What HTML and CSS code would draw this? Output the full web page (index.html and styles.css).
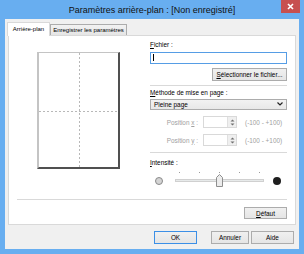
FILE: index.html
```html
<!DOCTYPE html>
<html lang="fr">
<head>
<meta charset="utf-8">
<title>Paramètres arrière-plan</title>
<link rel="stylesheet" href="styles.css">
</head>
<body>
<div class="window">
  <div class="titlebar">
    <span class="spacer"></span>
    <span class="title">Paramètres arrière-plan : [Non enregistré]</span>
    <span class="close-wrap"><span class="close"><svg width="7" height="7" viewBox="0 0 7 7"><path d="M1 1L6 6M6 1L1 6" stroke="#fff" stroke-width="1.6"/></svg></span></span>
  </div>
  <div class="client">
    <div class="tabs">
      <div class="tab active">Arrière-plan</div>
      <div class="tab">Enregistrer les paramètres</div>
    </div>
    <div class="panel">
      <div class="top">
        <div class="preview-col">
          <div class="page">
            <svg width="79" height="114" viewBox="0 0 79 114">
              <line x1="40.5" y1="0" x2="40.5" y2="114" stroke="#b8b8b8" stroke-dasharray="2 2"/>
              <line x1="0" y1="58.5" x2="79" y2="58.5" stroke="#b8b8b8" stroke-dasharray="2 2"/>
            </svg>
          </div>
        </div>
        <div class="controls">
          <div class="label"><u>F</u>ichier :</div>
          <div class="input"><span class="caret"></span></div>
          <div class="btn-row"><span class="btn wide-btn"><u>S</u>électionner le fichier...</span></div>
          <div class="sep"></div>
          <div class="label label-gap"><u>M</u>éthode de mise en page :</div>
          <div class="select">
            <span>Pleine page</span>
            <svg width="6" height="4" viewBox="0 0 6 4"><path d="M0.5 0.5L3 3L5.5 0.5" fill="none" stroke="#222" stroke-width="1.2"/></svg>
          </div>
          <div class="pos-row">
            <span class="pos-label">Position <u>x</u> :</span>
            <span class="spin"><span class="spin-field"></span><span class="spin-btn"><svg width="5" height="7" viewBox="0 0 5 7"><path d="M0.5 2.5L2.5 0.5L4.5 2.5Z M0.5 4.5L2.5 6.5L4.5 4.5Z" fill="#707070"/></svg></span></span>
            <span class="range">(-100 - +100)</span>
          </div>
          <div class="pos-row">
            <span class="pos-label">Position <u>y</u> :</span>
            <span class="spin"><span class="spin-field"></span><span class="spin-btn"><svg width="5" height="7" viewBox="0 0 5 7"><path d="M0.5 2.5L2.5 0.5L4.5 2.5Z M0.5 4.5L2.5 6.5L4.5 4.5Z" fill="#707070"/></svg></span></span>
            <span class="range">(-100 - +100)</span>
          </div>
          <div class="sep sep-gap"></div>
          <div class="label label-gap2"><u>I</u>ntensité :</div>
          <div class="slider">
            <svg width="137" height="20" viewBox="0 0 137 20">
              <circle cx="9" cy="13" r="3.5" fill="#d4d4d4" stroke="#8a8a8a"/>
              <rect x="25.5" y="11.5" width="88" height="2" fill="#e7eaea" stroke="#d0d0d0"/>
              <g fill="#9a9a9a">
                <rect x="29" y="4" width="1" height="1"/>
                <rect x="49" y="4" width="1" height="1"/>
                <rect x="69" y="4" width="1" height="1"/>
                <rect x="89" y="4" width="1" height="1"/>
                <rect x="109" y="4" width="1" height="1"/>
              </g>
              <path d="M66.5 18.5L72.5 18.5L72.5 9.5L69.5 6.5L66.5 9.5Z" fill="#ececec" stroke="#8e8e8e"/>
              <circle cx="127" cy="13" r="4" fill="#1e1e1e"/>
            </svg>
          </div>
        </div>
      </div>
      <div class="sep wide-sep"></div>
      <div class="btn-row defaut-row"><span class="btn"><u>D</u>éfaut</span></div>
    </div>
    <div class="footer">
      <span class="btn default">OK</span>
      <span class="btn annuler">Annuler</span>
      <span class="btn">Aide</span>
    </div>
  </div>
</div>
</body>
</html>
```

FILE: styles.css
```css
html, body {
  margin: 0;
  padding: 0;
}

body {
  width: 304px;
  height: 254px;
  overflow: hidden;
  font-family: "Liberation Sans", Arial, sans-serif;
  font-size: 6.4px;
  color: #000;
}

u {
  text-decoration: underline;
  text-underline-offset: 1px;
}

.window {
  width: 304px;
  height: 254px;
  background: #68aef0;
  display: flex;
  flex-direction: column;
  box-sizing: border-box;
}

.titlebar {
  height: 19px;
  display: grid;
  grid-template-columns: 1fr auto 1fr;
  align-items: start;
}

.title {
  font-size: 9px;
  line-height: 20px;
  color: #111;
  white-space: nowrap;
}

.close-wrap {
  justify-self: end;
  padding-right: 4px;
}

.close {
  width: 19px;
  height: 13px;
  background: #c75050;
  display: flex;
  align-items: center;
  justify-content: center;
}

.client {
  flex: 1;
  margin: 0 5px 5px;
  background: #f0f0f0;
  padding: 3px 3px 5px;
  display: flex;
  flex-direction: column;
  box-sizing: border-box;
}

.tabs {
  display: flex;
  height: 13px;
  align-items: flex-end;
  position: relative;
  z-index: 1;
}

.tab {
  box-sizing: border-box;
  height: 11px;
  width: 77px;
  border: 1px solid #acacac;
  border-bottom: none;
  background: linear-gradient(#f2f2f2, #e5e5e5);
  text-align: center;
  line-height: 10px;
  white-space: nowrap;
  font-size: 6px;
  overflow: hidden;
}

.tab.active {
  height: 14px;
  width: 43px;
  margin-left: -1px;
  margin-bottom: -1px;
  background: #fff;
  border-color: #d9d9d9;
  line-height: 13px;
}

.panel {
  height: 190px;
  box-sizing: border-box;
  background: #fff;
  border: 1px solid #d9d9d9;
  padding: 4px 8px 0;
  display: flex;
  flex-direction: column;
}

.top {
  display: flex;
  height: 148px;
}

.preview-col {
  width: 133px;
  flex: none;
}

.page {
  width: 83px;
  height: 117px;
  box-sizing: border-box;
  margin: 12px 0 0 20px;
  background: #fff;
  border-left: 2px solid #c4c4c4;
  border-top: 1px solid #c4c4c4;
  border-right: 2px solid #505050;
  border-bottom: 2px solid #505050;
}

.page svg {
  display: block;
}

.controls {
  width: 137px;
  display: flex;
  flex-direction: column;
}

.label {
  height: 9px;
  line-height: 9px;
  white-space: nowrap;
}

.label-gap {
  margin-top: 2px;
}

.label-gap2 {
  margin-top: 5px;
}

.input {
  margin-top: 3px;
  height: 12px;
  box-sizing: border-box;
  border: 1px solid #569de5;
  background: #fff;
  display: flex;
  align-items: center;
  padding-left: 2px;
}

.caret {
  width: 1px;
  height: 7px;
  background: #000;
}

.btn-row {
  display: flex;
  justify-content: flex-end;
  margin-top: 4px;
}

.btn {
  box-sizing: border-box;
  height: 12px;
  width: 43px;
  border: 1px solid #acacac;
  background: linear-gradient(#f0f0f0, #e5e5e5);
  display: flex;
  align-items: center;
  justify-content: center;
  white-space: nowrap;
}

.wide-btn {
  width: 75px;
  height: 13px;
}

.sep {
  margin-top: 4px;
  height: 1px;
  background: #d9d9d9;
}

.sep-gap {
  margin-top: 6px;
}

.select {
  margin-top: 2px;
  height: 12px;
  box-sizing: border-box;
  border: 1px solid #acacac;
  background: linear-gradient(#f2f2f2, #e8e8e8);
  display: flex;
  align-items: center;
  justify-content: space-between;
  padding: 0 3px 0 3px;
}

.pos-row {
  margin-top: 6px;
  height: 12px;
  display: grid;
  grid-template-columns: 53px 34px 1fr;
  align-items: center;
  color: #a0a0a0;
}

.pos-label {
  text-align: right;
  padding-right: 5px;
  white-space: nowrap;
}

.spin {
  height: 12px;
  box-sizing: border-box;
  border: 1px solid #d9d9d9;
  background: #fff;
  display: flex;
}

.spin-field {
  flex: 1;
}

.spin-btn {
  width: 8px;
  background: #efefef;
  border-left: 1px solid #e0e0e0;
  display: flex;
  align-items: center;
  justify-content: center;
}

.range {
  padding-left: 8px;
  white-space: nowrap;
}

.slider {
  margin-top: 1px;
  height: 20px;
}

.slider svg {
  display: block;
}

.wide-sep {
  margin-top: 11px;
}

.defaut-row {
  margin-top: 7px;
}

.footer {
  margin-top: 6px;
  display: flex;
  justify-content: flex-end;
  gap: 2px;
  padding-right: 2px;
}

.footer .btn {
  height: 13px;
}

.footer .btn:first-child {
  margin-right: 12px;
}

.footer .annuler {
  width: 38px;
}

.btn.default {
  border-color: #3c8fe6;
}
```
